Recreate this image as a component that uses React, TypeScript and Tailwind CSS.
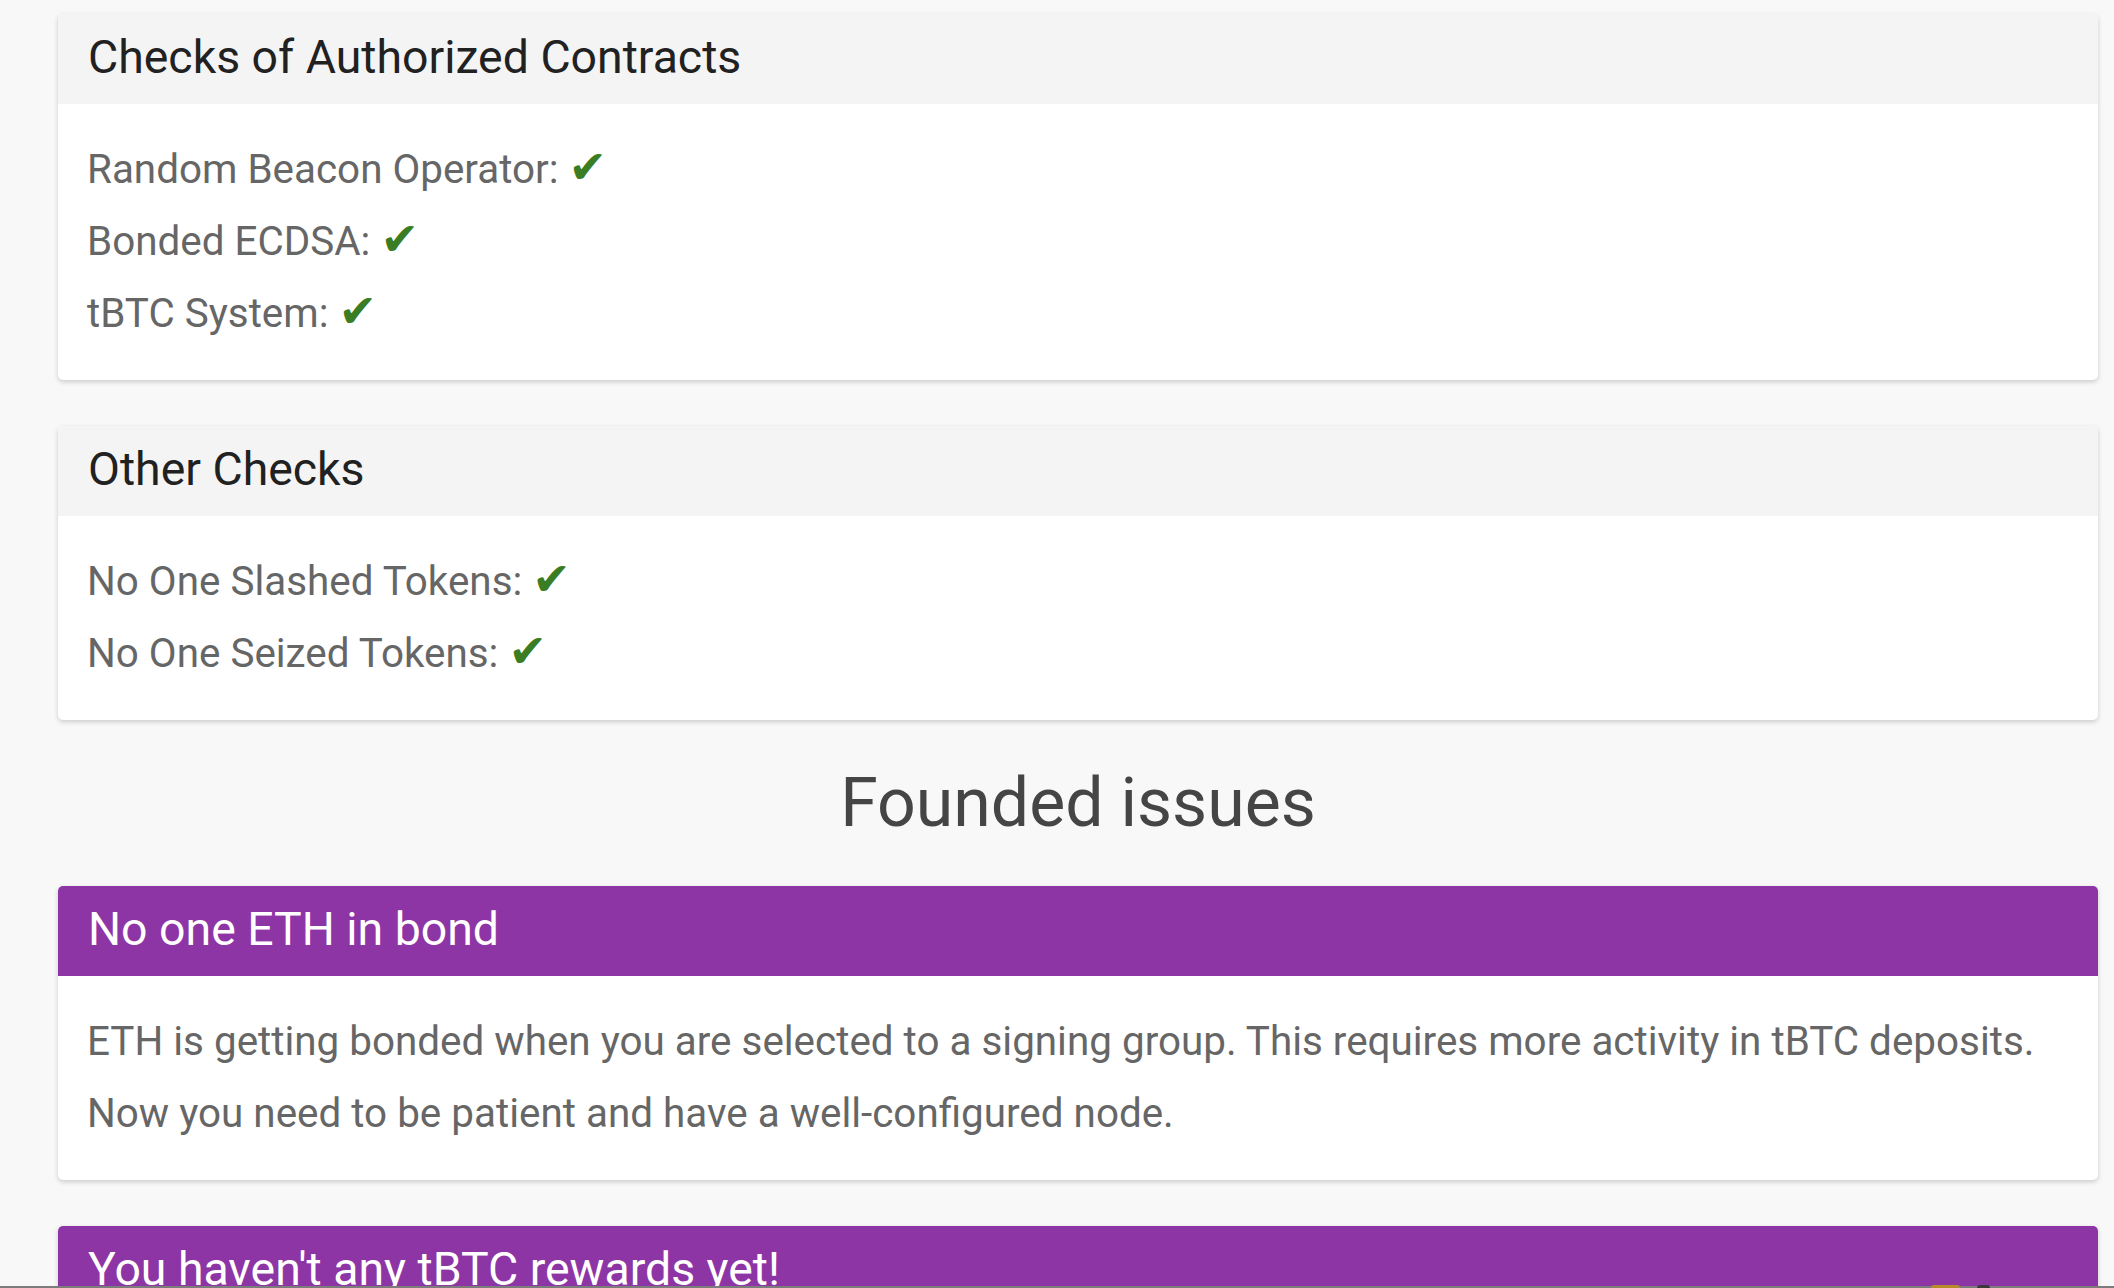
import React from 'react';

const checkGroups = [
    {
        title: 'Checks of Authorized Contracts',
        items: ['Random Beacon Operator:', 'Bonded ECDSA:', 'tBTC System:'],
    },
    {
        title: 'Other Checks',
        items: ['No One Slashed Tokens:', 'No One Seized Tokens:'],
    },
];

const Check = () => (
    <span className="text-[46px] leading-none text-[#3a7d22] font-['DejaVu_Sans',sans-serif]">✔</span>
);

const App: React.FC = () => {
    return (
        <div className="relative h-[1288px] w-full overflow-hidden bg-[#f8f8f8] font-['Roboto','Liberation_Sans',sans-serif]">
            <div className="flex flex-col gap-[46px] pl-[58px] pr-[16px] pt-[14px]">
                {checkGroups.map(group => (
                    <div key={group.title} className="overflow-hidden rounded-[5px] bg-white shadow-[0_2px_5px_rgba(0,0,0,0.18)]">
                        <div className="flex h-[90px] items-center bg-[#f4f4f4] px-[30px] pb-[2px] text-[46.4px] text-[#212121]">
                            {group.title}
                        </div>
                        <div className="px-[29px] py-[30px] text-[40.4px] leading-[72px] text-[#666666]">
                            {group.items.map(item => (
                                <div key={item} className="h-[72px]">
                                    {item} <Check />
                                </div>
                            ))}
                        </div>
                    </div>
                ))}

                <h2 className="text-center text-[68px] leading-[74px] text-[#454545]">Founded issues</h2>

                {/* issues */}
                <div className="overflow-hidden rounded-[5px] bg-white shadow-[0_2px_5px_rgba(0,0,0,0.18)]">
                    <div className="flex h-[90px] items-center bg-[#8e35a6] px-[30px] pb-[2px] text-[46.4px] text-white">
                        No one ETH in bond
                    </div>
                    <div className="px-[29px] py-[30px] text-[40.4px] leading-[72px] text-[#666666]">
                        ETH is getting bonded when you are selected to a signing group. This requires more activity in tBTC deposits.
                        <br />
                        Now you need to be patient and have a well-configured node.
                    </div>
                </div>

                <div className="overflow-hidden rounded-[5px] bg-white shadow-[0_2px_5px_rgba(0,0,0,0.18)]">
                    <div className="flex h-[90px] items-center bg-[#8e35a6] px-[30px] pb-[2px] text-[46.4px] text-white">
                        You haven't any tBTC rewards yet!
                    </div>
                    <div className="px-[29px] py-[30px] text-[40.4px] leading-[72px] text-[#666666]">
                        Rewards will appear here once your node takes part in a deposit.
                    </div>
                </div>
            </div>

            {/* window edge */}
            <div className="absolute bottom-0 left-0 right-0 h-[2px] bg-[#7c7c7c]" />
            <div className="absolute bottom-0 left-[1931px] h-[3px] w-[29px] rounded-t bg-[#b98a2a]" />
            <div className="absolute bottom-0 left-[1977px] h-[3px] w-[13px] rounded-t bg-[#3a3a3a]" />
        </div>
    );
};

export default App;
